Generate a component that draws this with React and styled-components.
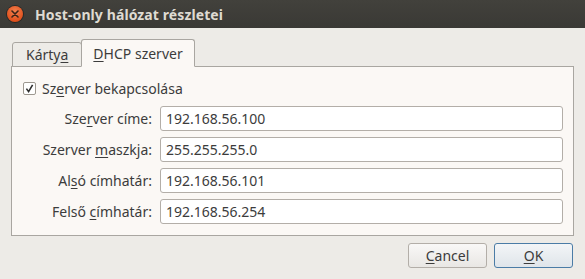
import React from "react";
import styled, { createGlobalStyle } from "styled-components";

const GlobalStyle = createGlobalStyle`
  html, body { margin: 0; padding: 0; background: #edebe7; }
  body { font-family: "Noto Sans", "DejaVu Sans", sans-serif; }
`;

const Window = styled.div`
  width: 585px;
  height: 279px;
  display: flex;
  flex-direction: column;
  background: #edebe7;
  color: #3c3c3c;
  font-size: 13px;
  overflow: hidden;
`;

const TitleBar = styled.div`
  height: 28px;
  flex: none;
  display: flex;
  align-items: center;
  padding-left: 7px;
  gap: 12px;
  background: linear-gradient(#42413c, #3a3935);
`;

const CloseButton = styled.div`
  width: 16px;
  height: 16px;
  border-radius: 50%;
  background: radial-gradient(circle at 50% 35%, #f3814f, #e1511d 70%, #c9400f);
  box-shadow: 0 0 0 1px rgba(0, 0, 0, 0.35);
  display: flex;
  align-items: center;
  justify-content: center;
`;

const Title = styled.div`
  color: #dfdbd2;
  font-weight: bold;
  font-size: 14px;
  letter-spacing: 0.1px;
`;

const Body = styled.div`
  flex: 1;
  display: flex;
  flex-direction: column;
  padding: 11px 11px 0 11px;
`;

const TabBar = styled.div`
  display: flex;
  align-items: flex-end;
  height: 28px;
  padding-left: 1px;
  margin-bottom: -1px;
  position: relative;
  z-index: 1;
`;

const Tab = styled.div`
  box-sizing: border-box;
  height: ${(p) => (p.$active ? "28px" : "25px")};
  padding: 0 ${(p) => (p.$active ? "11px" : "13px")};
  display: flex;
  align-items: center;
  border: 1px solid #a9a6a1;
  border-bottom: 1px solid ${(p) => (p.$active ? "#fbf8f5" : "#a9a6a1")};
  border-radius: 3px 3px 0 0;
  background: ${(p) => (p.$active ? "#fbf8f5" : "#edebe7")};
  margin-left: ${(p) => (p.$active ? "-1px" : "0")};
  color: #3c3c3c;
  font-size: 14px;
`;

const Mn = styled.span`
  text-decoration: underline;
  text-underline-offset: 2px;
`;

const Panel = styled.div`
  box-sizing: border-box;
  height: 170px;
  border: 1px solid #a9a6a1;
  background: #fbf8f5;
  padding: 11px 10px 0 11px;
  display: flex;
  flex-direction: column;
`;

const CheckRow = styled.label`
  display: flex;
  align-items: center;
  gap: 6px;
  height: 20px;
  font-size: 14px;
  margin-bottom: 8px;
`;

const CheckBox = styled.span`
  box-sizing: border-box;
  width: 13px;
  height: 13px;
  border: 1px solid #9d9890;
  border-radius: 2px;
  background: #ffffff;
  display: flex;
  align-items: center;
  justify-content: center;
`;

const Form = styled.div`
  display: grid;
  grid-template-columns: 111px 1fr;
  column-gap: 8px;
  row-gap: 6px;
  padding-left: 18px;
`;

const FieldLabel = styled.label`
  text-align: right;
  align-self: center;
  white-space: nowrap;
  font-size: 14px;
`;

const Input = styled.input`
  box-sizing: border-box;
  height: 25px;
  border: 1px solid #b3aea8;
  border-radius: 3px;
  background: #ffffff;
  padding: 0 5px;
  font-family: inherit;
  font-size: 14px;
  color: #3c3c3c;
  outline: none;
  width: 100%;
`;

const ButtonRow = styled.div`
  display: flex;
  justify-content: flex-end;
  gap: 7px;
  margin-top: 7px;
  padding-right: 1px;
`;

const Button = styled.button`
  box-sizing: border-box;
  width: 79px;
  height: 25px;
  border-radius: 3px;
  font-family: inherit;
  font-size: 14px;
  color: #3c3c3c;
  padding: 0;
  border: 1px solid ${(p) => (p.$default ? "#4b7ca6" : "#b3aea8")};
  background: ${(p) =>
    p.$default
      ? "linear-gradient(#f3f5f7, #dfe5ea)"
      : "linear-gradient(#f9f8f7, #e9e7e4)"};
`;

const rows = [
  { pre: "Sze", mn: "r", post: "ver címe:", value: "192.168.56.100" },
  { pre: "Szerver ", mn: "m", post: "aszkja:", value: "255.255.255.0" },
  { pre: "Al", mn: "s", post: "ó címhatár:", value: "192.168.56.101" },
  { pre: "Felső ", mn: "c", post: "ímhatár:", value: "192.168.56.254" },
];

export default function App() {
  return (
    <>
      <GlobalStyle />
      <Window>
        <TitleBar>
          <CloseButton>
            <svg width="8" height="8" viewBox="0 0 8 8">
              <path d="M1 1 L7 7 M7 1 L1 7" stroke="#3a2418" strokeWidth="1.6" strokeLinecap="round" />
            </svg>
          </CloseButton>
          <Title>Host-only hálózat részletei</Title>
        </TitleBar>
        <Body>
          <TabBar>
            <Tab>
              Kárty<Mn>a</Mn>
            </Tab>
            <Tab $active>
              <Mn>D</Mn>HCP szerver
            </Tab>
          </TabBar>
          <Panel>
            <CheckRow>
              <CheckBox>
                <svg width="11" height="11" viewBox="0 0 11 11">
                  <path d="M2.4 5.6 L4.6 8.6 L8.6 1.8" fill="none" stroke="#2f2f2f" strokeWidth="1.6" />
                </svg>
              </CheckBox>
              <span>
                Sz<Mn>e</Mn>rver bekapcsolása
              </span>
            </CheckRow>
            <Form>
              {rows.map((r) => (
                <React.Fragment key={r.value}>
                  <FieldLabel>
                    {r.pre}
                    <Mn>{r.mn}</Mn>
                    {r.post}
                  </FieldLabel>
                  <Input defaultValue={r.value} />
                </React.Fragment>
              ))}
            </Form>
          </Panel>
          <ButtonRow>
            <Button>
              <Mn>C</Mn>ancel
            </Button>
            <Button $default>
              <Mn>O</Mn>K
            </Button>
          </ButtonRow>
        </Body>
      </Window>
    </>
  );
}
